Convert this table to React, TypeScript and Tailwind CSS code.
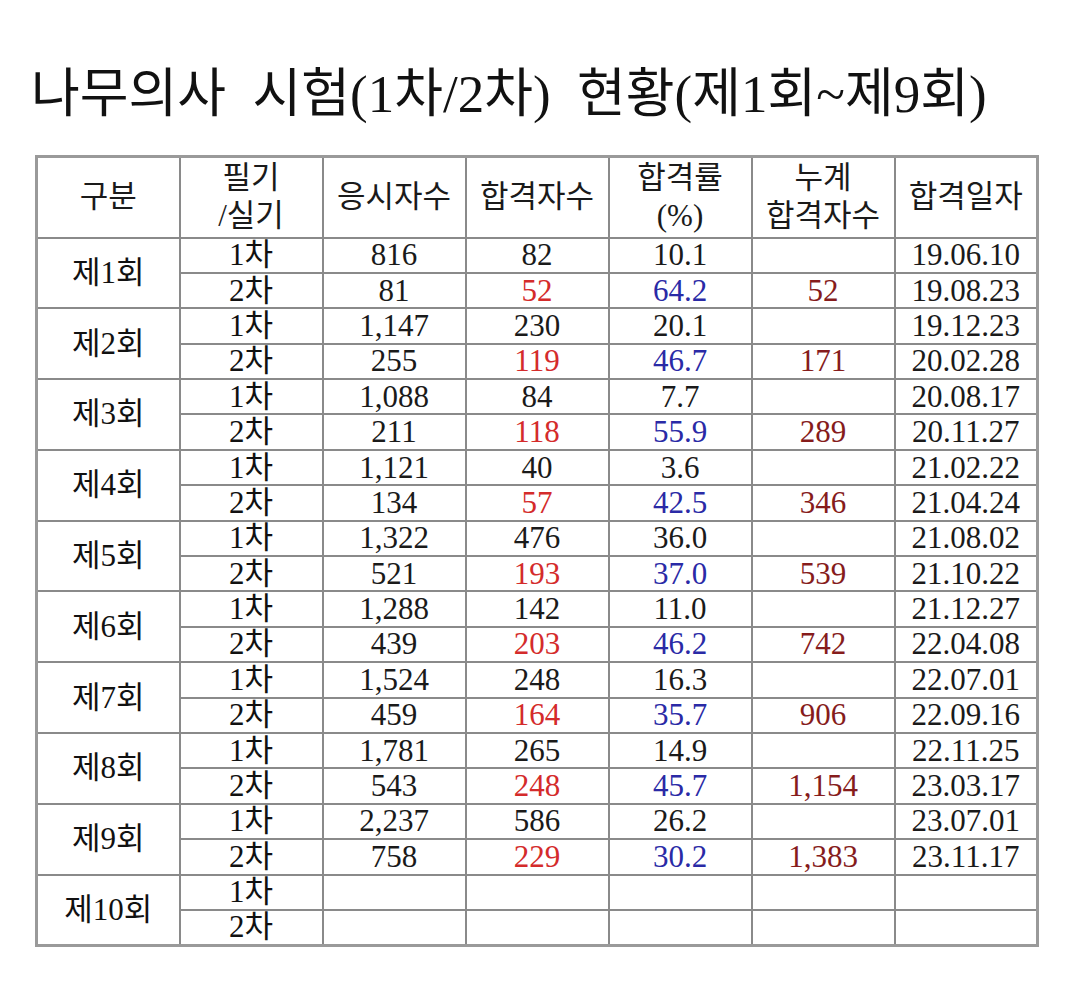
import { FC } from "react";

type Row = {
  round: string;
  first: string[];
  second: string[];
};

// [응시자수, 합격자수, 합격률, 누계, 합격일자]
const rows: Row[] = [
  { round: "제1회", first: ["816", "82", "10.1", "", "19.06.10"], second: ["81", "52", "64.2", "52", "19.08.23"] },
  { round: "제2회", first: ["1,147", "230", "20.1", "", "19.12.23"], second: ["255", "119", "46.7", "171", "20.02.28"] },
  { round: "제3회", first: ["1,088", "84", "7.7", "", "20.08.17"], second: ["211", "118", "55.9", "289", "20.11.27"] },
  { round: "제4회", first: ["1,121", "40", "3.6", "", "21.02.22"], second: ["134", "57", "42.5", "346", "21.04.24"] },
  { round: "제5회", first: ["1,322", "476", "36.0", "", "21.08.02"], second: ["521", "193", "37.0", "539", "21.10.22"] },
  { round: "제6회", first: ["1,288", "142", "11.0", "", "21.12.27"], second: ["439", "203", "46.2", "742", "22.04.08"] },
  { round: "제7회", first: ["1,524", "248", "16.3", "", "22.07.01"], second: ["459", "164", "35.7", "906", "22.09.16"] },
  { round: "제8회", first: ["1,781", "265", "14.9", "", "22.11.25"], second: ["543", "248", "45.7", "1,154", "23.03.17"] },
  { round: "제9회", first: ["2,237", "586", "26.2", "", "23.07.01"], second: ["758", "229", "30.2", "1,383", "23.11.17"] },
  { round: "제10회", first: ["", "", "", "", ""], second: ["", "", "", "", ""] },
];

const cell = "border-2 border-[#8a8a8a] p-0 text-center align-middle";

// 2차 row colours: 합격자수 red, 합격률 blue, 누계 dark red
const secondColor = ["text-[#1a1a1a]", "text-[#d42b2b]", "text-[#2a2aa6]", "text-[#861c1c]", "text-[#1a1a1a]"];

const Group: FC<{ row: Row }> = ({ row }) => (
  <>
    <tr className="h-[35.4px]">
      <td rowSpan={2} className={cell}>
        {row.round}
      </td>
      <td className={cell}>1차</td>
      {row.first.map((v, i) => (
        <td key={i} className={cell + " text-[#1a1a1a]"}>
          {v}
        </td>
      ))}
    </tr>
    <tr className="h-[35.4px]">
      <td className={cell}>2차</td>
      {row.second.map((v, i) => (
        <td key={i} className={cell + " " + secondColor[i]}>
          {v}
        </td>
      ))}
    </tr>
  </>
);

export default function App() {
  return (
    <div className="w-[1068px] h-[982px] bg-white text-[#111] font-['Liberation_Serif','Noto_Sans_CJK_KR',serif]">
      <h1 className="pt-[64px] pl-[31px] h-[124px] text-[53px] leading-[60px] font-normal whitespace-pre">
        나무의사  시험(1차/2차)  현황(제1회~제9회)
      </h1>
      <div className="pt-[31px] pl-[35px]">
        <table className="w-[1002px] table-fixed border-collapse border-[3px] border-[#9a9a9a] text-[31px] leading-[32px]">
          <colgroup>
            {[0, 1, 2, 3, 4, 5, 6].map((i) => (
              <col key={i} className="w-[143px]" />
            ))}
          </colgroup>
          <thead>
            <tr className="h-[81px] leading-[38px] text-[#1a1a1a]">
              <th className={cell + " font-normal"}>구분</th>
              <th className={cell + " font-normal"}>
                필기
                <br />
                /실기
              </th>
              <th className={cell + " font-normal"}>응시자수</th>
              <th className={cell + " font-normal"}>합격자수</th>
              <th className={cell + " font-normal"}>
                합격률
                <br />
                (%)
              </th>
              <th className={cell + " font-normal"}>
                누계
                <br />
                합격자수
              </th>
              <th className={cell + " font-normal"}>합격일자</th>
            </tr>
          </thead>
          <tbody>
            {rows.map((r) => (
              <Group key={r.round} row={r} />
            ))}
          </tbody>
        </table>
      </div>
    </div>
  );
}
